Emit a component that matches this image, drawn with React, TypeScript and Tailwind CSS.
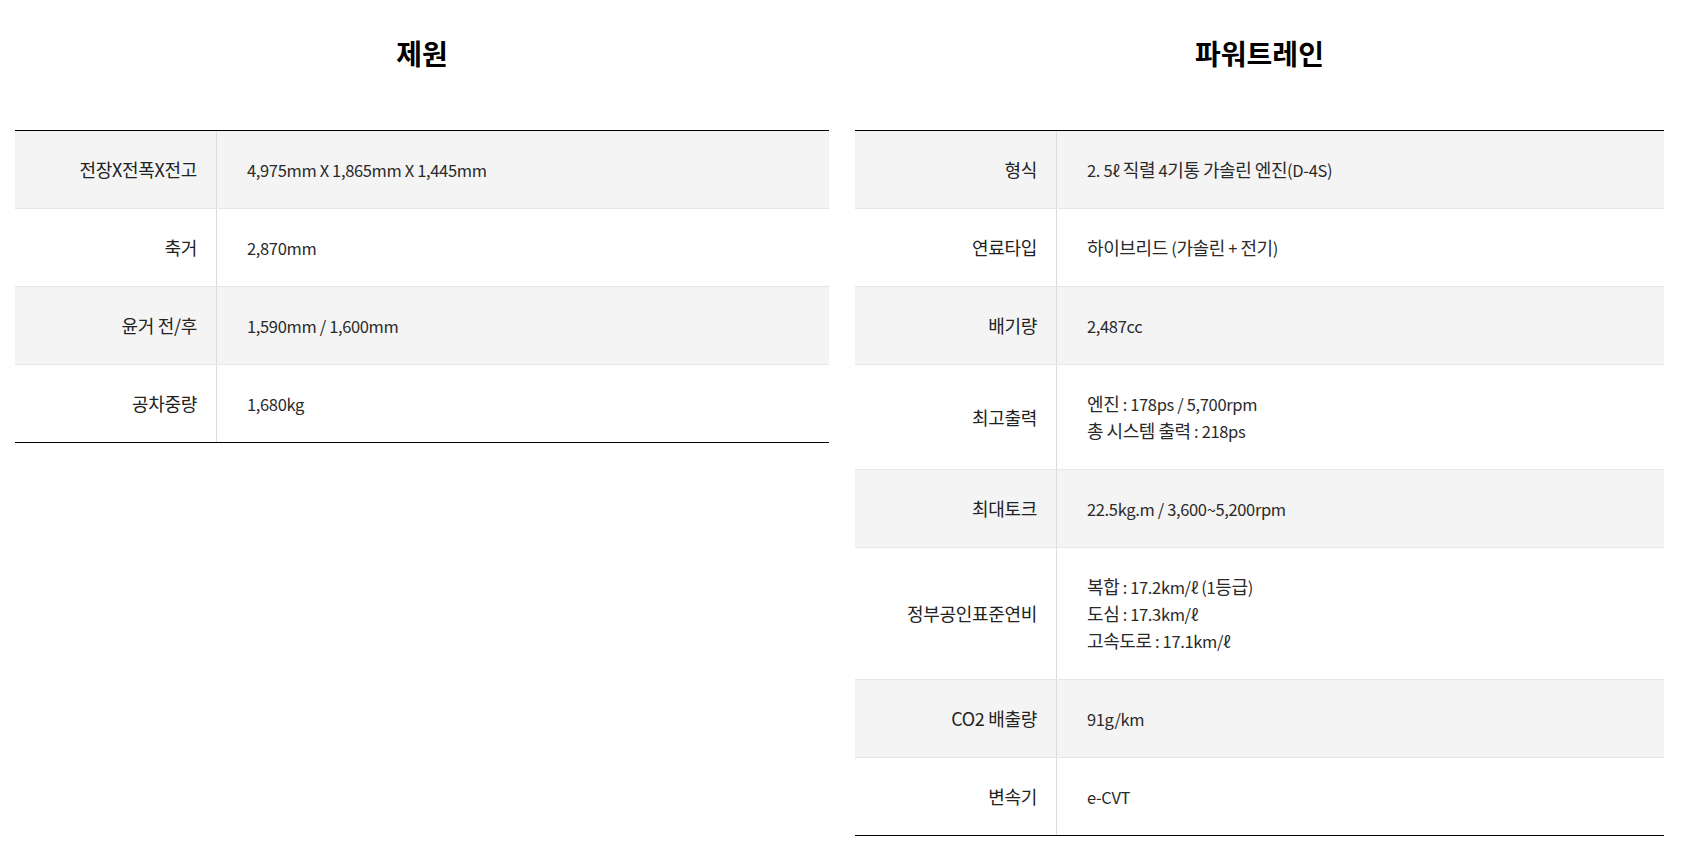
import React from "react";

type Row = { label: string; value: string[] };

const specs: Row[] = [
  { label: "전장X전폭X전고", value: ["4,975mm X 1,865mm X 1,445mm"] },
  { label: "축거", value: ["2,870mm"] },
  { label: "윤거 전/후", value: ["1,590mm / 1,600mm"] },
  { label: "공차중량", value: ["1,680kg"] },
];

const power: Row[] = [
  { label: "형식", value: ["2. 5ℓ 직렬 4기통 가솔린 엔진(D-4S)"] },
  { label: "연료타입", value: ["하이브리드 (가솔린 + 전기)"] },
  { label: "배기량", value: ["2,487cc"] },
  { label: "최고출력", value: ["엔진 : 178ps / 5,700rpm", "총 시스템 출력 : 218ps"] },
  { label: "최대토크", value: ["22.5kg.m / 3,600~5,200rpm"] },
  {
    label: "정부공인표준연비",
    value: ["복합 : 17.2km/ℓ (1등급)", "도심 : 17.3km/ℓ", "고속도로 : 17.1km/ℓ"],
  },
  { label: "CO2 배출량", value: ["91g/km"] },
  { label: "변속기", value: ["e-CVT"] },
];

function Value({ text }: { text: string }) {
  const parts = text.split(/([\uAC00-\uD7A3]+)/);
  return (
    <div className="h-[27px] leading-[27px] whitespace-nowrap">
      {parts.map((p, i) =>
        i % 2 === 1 ? (
          <span key={i} className="text-[18px] leading-[20px] tracking-[-0.4px]">
            {p}
          </span>
        ) : (
          <span key={i} className="text-[16.5px] leading-[20px] tracking-[-0.35px]">
            {p}
          </span>
        )
      )}
    </div>
  );
}

function SpecTable({ title, rows, width }: { title: string; rows: Row[]; width: string }) {
  return (
    <section className={width}>
      <h2 className="pt-[33px] mb-[57px] text-center text-[28px] leading-[40px] font-bold text-black">
        {title}
      </h2>
      <div className="border-t border-b border-black">
        {rows.map((r, i) => (
          <div
            key={r.label}
            className={
              "flex " +
              (i < rows.length - 1 ? "border-b border-[#e6e6e6] " : "") +
              (i % 2 === 0 ? "bg-[#f4f4f4]" : "bg-white")
            }
          >
            <div className="w-[202px] shrink-0 border-r border-[#dcdcdc] pr-[19px] flex items-center justify-end text-right text-[18px] leading-[27px] text-[#222] py-[25px] tracking-[-0.3px]">
              {r.label}
            </div>
            <div className="flex-1 pl-[30px] py-[25px] text-[18px] leading-[27px] text-[#2a2a2a]">
              {r.value.map((v) => (
                <Value key={v} text={v} />
              ))}
            </div>
          </div>
        ))}
      </div>
    </section>
  );
}

export default function App() {
  return (
    <div
      className="w-[1687px] h-[854px] bg-white flex items-start gap-[26px] pl-[15px]"
      style={{ fontFamily: '"Noto Sans CJK KR", "Noto Sans", sans-serif' }}
    >
      <SpecTable title="제원" rows={specs} width="w-[814px]" />
      <SpecTable title="파워트레인" rows={power} width="w-[809px]" />
    </div>
  );
}
